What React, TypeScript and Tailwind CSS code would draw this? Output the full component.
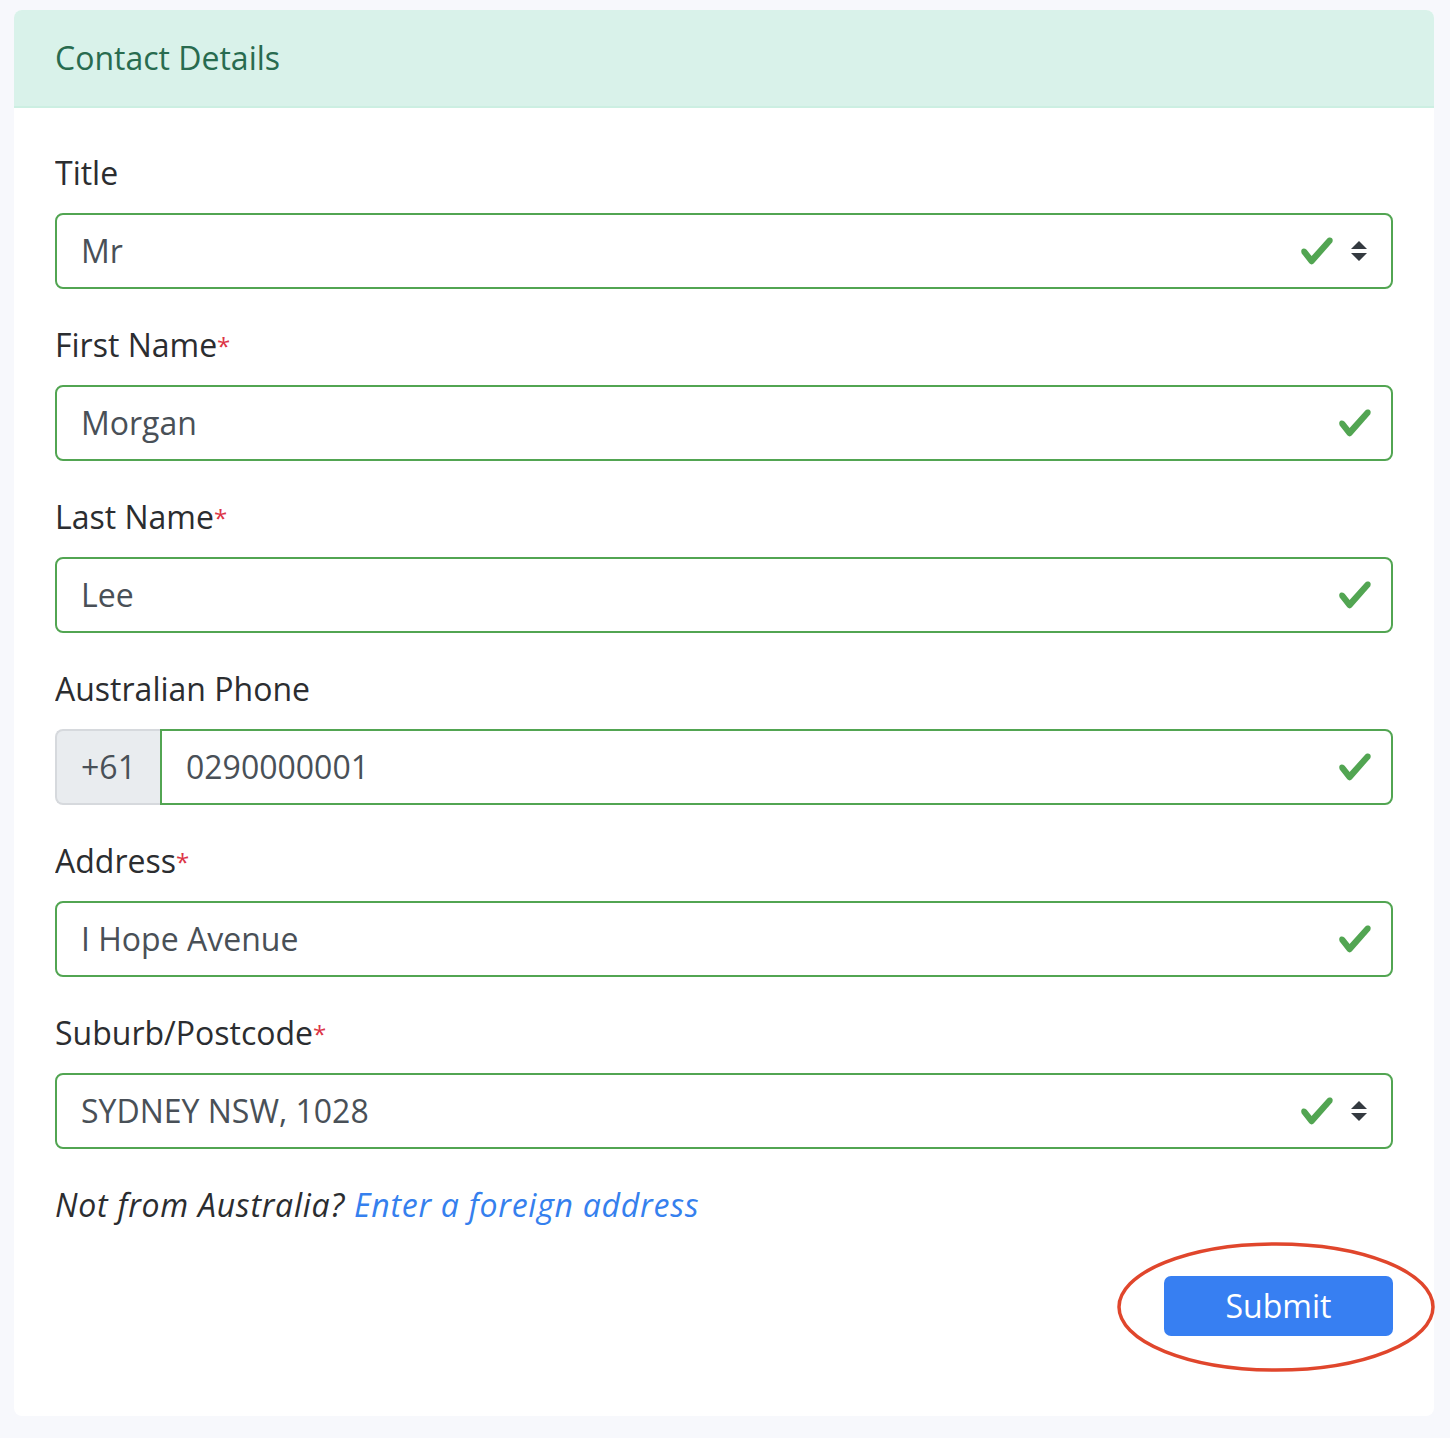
import React from "react";

const GREEN = "#52a552";

function Check() {
  return (
    <svg width="36" height="36" viewBox="0 0 8 8" className="shrink-0">
      <path
        fill={GREEN}
        d="M2.3 6.73L.6 4.53c-.4-1.04.46-1.4 1.1-.8l1.1 1.4 3.4-3.8c.6-.63 1.6-.27 1.2.7l-4 4.6c-.43.5-.8.4-1.1.1z"
      />
    </svg>
  );
}

function Arrows() {
  return (
    <svg width="16" height="20" viewBox="0 0 4 5" className="shrink-0">
      <path fill="#343a40" d="M2 0L0 2h4zm0 5L0 3h4z" />
    </svg>
  );
}

function Label({ text, required }: { text: string; required?: boolean }) {
  return (
    <div className="h-[48px] text-[32px] leading-[48px] mb-[16px] text-[#2b2d30] overflow-hidden">
      {text}
      {required && <span className="text-[#dc3545] text-[24px] leading-none align-[2px]">*</span>}
    </div>
  );
}

function Field({ value, select }: { value: string; select?: boolean }) {
  return (
    <div
      className={`h-[76px] border-2 border-[#52a552] rounded-[8px] flex items-center pl-[24px] ${
        select ? "pr-[24px]" : "pr-[18px]"
      }`}
    >
      <div className="flex-1 text-[32px] leading-[48px] text-[#495057]">{value}</div>
      {select ? (
        <div className="flex items-center gap-[16px]">
          <Check />
          <Arrows />
        </div>
      ) : (
        <Check />
      )}
    </div>
  );
}

export default function App() {
  return (
    <div
      className="bg-[#f7f8fc] min-h-[1438px] pt-[10px] pl-[14px] pr-[16px] pb-[22px]"
      style={{ fontFamily: '"Open Sans", "Noto Sans", sans-serif' }}
    >
      <div className="bg-white rounded-[8px]">
        <div className="bg-[#d9f2ea] rounded-t-[8px] border-b-2 border-[#ccefe2] px-[41px] py-[24px] text-[32px] leading-[48px] text-[#286b4f]">
          Contact Details
        </div>
        <div className="px-[41px] pt-[41px] pb-[80px]">
          <div className="mb-[32px]">
            <Label text="Title" />
            <Field value="Mr" select />
          </div>
          <div className="mb-[32px]">
            <Label text="First Name" required />
            <Field value="Morgan" />
          </div>
          <div className="mb-[32px]">
            <Label text="Last Name" required />
            <Field value="Lee" />
          </div>
          <div className="mb-[32px]">
            <Label text="Australian Phone" />
            <div className="flex h-[76px]">
              <div className="w-[105px] shrink-0 bg-[#e9ecef] border-2 border-r-0 border-[#d6d9dd] rounded-l-[8px] flex items-center justify-center text-[32px] leading-[48px] text-[#495057]">
                +61
              </div>
              <div className="flex-1 border-2 border-[#52a552] rounded-r-[8px] flex items-center pl-[24px] pr-[18px]">
                <div className="flex-1 text-[32px] leading-[48px] text-[#495057]">0290000001</div>
                <Check />
              </div>
            </div>
          </div>
          <div className="mb-[32px]">
            <Label text="Address" required />
            <Field value="I Hope Avenue" />
          </div>
          <div className="mb-[32px]">
            <Label text="Suburb/Postcode" required />
            <Field value="SYDNEY NSW, 1028" select />
          </div>
          <div className="text-[32px] leading-[48px] italic tracking-[0.75px] text-[#2b2d30]">
            Not from Australia? <span className="text-[#3580ee]">Enter a foreign address</span>
          </div>
          <div className="flex justify-end mt-[47px]">
            <div className="relative">
              <button className="w-[229px] h-[60px] rounded-[7px] bg-[#377ff2] text-white text-[32px] leading-[36px]">
                Submit
              </button>
              <svg
                className="absolute left-[-47px] top-[-34px] pointer-events-none"
                width="320"
                height="132"
                viewBox="0 0 320 132"
              >
                <ellipse
                  cx="159"
                  cy="65"
                  rx="157"
                  ry="63"
                  fill="none"
                  stroke="#e0462c"
                  strokeWidth="3.5"
                />
              </svg>
            </div>
          </div>
        </div>
      </div>
    </div>
  );
}
